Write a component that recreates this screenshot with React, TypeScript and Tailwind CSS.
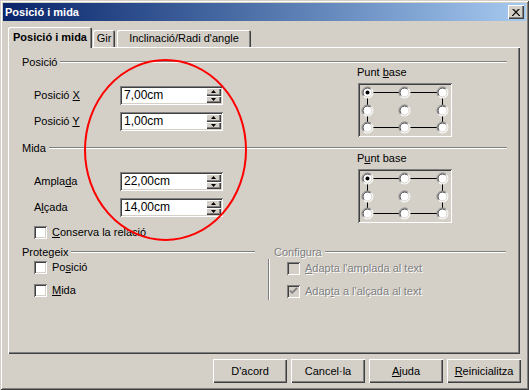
import React from 'react';

// classic win2000 bevels
const sunken = 'shadow-[inset_1px_1px_#808080,inset_-1px_-1px_#ffffff,inset_2px_2px_#404040,inset_-2px_-2px_#d4d0c8]';
const raised = 'shadow-[inset_1px_1px_#ffffff,inset_-1px_-1px_#404040,inset_-2px_-2px_#808080]';
const disabledText = 'text-[#808080] [text-shadow:1px_1px_0_#ffffff]';

function Header({ label, disabled, className }: { label: string; disabled?: boolean; className?: string }) {
    return (
        <div className={`flex items-center h-[13px] ${className ?? ''}`}>
            <span className={`leading-[13px] ${disabled ? disabledText : ''}`}>{label}</span>
            <div className="flex-1 ml-[3px] mb-[1px] h-[2px] border-t border-t-[#808080] border-b border-b-white" />
        </div>
    );
}

function SpinButton({ up }: { up?: boolean }) {
    return (
        <div className={`flex-1 flex items-center justify-center bg-[#d4d0c8] ${raised}`}>
            <svg width="5" height="3" viewBox="0 0 5 3">
                {up ? <path d="M2.5 0 L5 3 L0 3 Z" fill="#000" /> : <path d="M0 0 L5 0 L2.5 3 Z" fill="#000" />}
            </svg>
        </div>
    );
}

function Field({ label, value }: { label: React.ReactNode; value: string }) {
    return (
        <div className="flex items-center h-[19px]">
            <span className="w-[86px] leading-[13px]">{label}</span>
            <div className={`flex w-[103px] h-[19px] bg-white p-[2px] ${sunken}`}>
                <span className="flex-1 pl-[2px] leading-[15px] text-[12px]">{value}</span>
                <div className="flex flex-col w-[15px]">
                    <SpinButton up />
                    <SpinButton />
                </div>
            </div>
        </div>
    );
}

function Check({ label, checked, disabled }: { label: React.ReactNode; checked?: boolean; disabled?: boolean }) {
    return (
        <div className="flex items-center h-[13px]">
            <div className={`w-[13px] h-[13px] flex items-center justify-center ${disabled ? 'bg-[#d4d0c8]' : 'bg-white'} ${sunken}`}>
                {checked && (
                    <svg width="13" height="13" viewBox="0 0 13 13">
                        <path d="M3 5.5 L5.2 7.8 L10 3" stroke={disabled ? '#808080' : '#000'} strokeWidth="1.8" fill="none" />
                    </svg>
                )}
            </div>
            <span className={`ml-[5px] leading-[13px] ${disabled ? disabledText : ''}`}>{label}</span>
        </div>
    );
}

// radio knob for the base point grid
function Knob({ x, y, on }: { x: number; y: number; on?: boolean }) {
    const r1 = 5.5;
    const r2 = 4.5;
    const d = 0.7071;
    const arc = (r: number, tl: boolean) =>
        tl
            ? `M${x - r * d} ${y + r * d} A${r} ${r} 0 0 1 ${x + r * d} ${y - r * d}`
            : `M${x + r * d} ${y - r * d} A${r} ${r} 0 0 1 ${x - r * d} ${y + r * d}`;
    return (
        <g>
            <circle cx={x} cy={y} r={5.5} fill="#fff" />
            <path d={arc(r1, true)} stroke="#808080" fill="none" />
            <path d={arc(r2, true)} stroke="#404040" fill="none" />
            <path d={arc(r1, false)} stroke="#fff" fill="none" />
            <path d={arc(r2, false)} stroke="#d4d0c8" fill="none" />
            {on && <circle cx={x} cy={y} r={2} fill="#000" />}
        </g>
    );
}

function PointGrid() {
    const xs = [9.5, 46.5, 84.5];
    const ys = [9.5, 27.5, 44.5];
    return (
        <div className={`ml-[1px] mt-[4px] w-[94px] h-[54px] ${sunken}`}>
            <svg width="94" height="54" viewBox="0 0 94 54">
                <path
                    d={`M${xs[0]} ${ys[0]} H${xs[2]} M${xs[0]} ${ys[2]} H${xs[2]} M${xs[0]} ${ys[0]} V${ys[2]} M${xs[2]} ${ys[0]} V${ys[2]}`}
                    stroke="#000"
                    fill="none"
                />
                {ys.map((y, j) => xs.map((x, i) => <Knob key={`${i}-${j}`} x={x} y={y} on={i === 0 && j === 0} />))}
            </svg>
        </div>
    );
}

function DlgButton({ children }: { children: React.ReactNode }) {
    return (
        <div className={`w-[74px] h-[24px] flex items-center justify-center bg-[#d4d0c8] ${raised}`}>
            {children}
        </div>
    );
}

export default function App() {
    return (
        <div className="relative w-[529px] h-[390px] p-[3px] bg-[#d4d0c8] text-black text-[11px] font-['Liberation_Sans',Arial,sans-serif] shadow-[inset_1px_1px_#d4d0c8,inset_-1px_-1px_#404040,inset_2px_2px_#ffffff,inset_-2px_-2px_#808080] overflow-hidden">
            {/* title bar */}
            <div className="flex items-center justify-between h-[18px] pl-[2px] pr-[2px] bg-linear-to-r from-[#0a246a] to-[#a6caf0]">
                <span className="text-white font-bold leading-[13px]">Posició i mida</span>
                <div className={`w-[16px] h-[14px] flex items-center justify-center bg-[#d4d0c8] ${raised}`}>
                    <svg width="8" height="7" viewBox="0 0 8 7">
                        <path d="M0.5 0 L7.5 7 M7.5 0 L0.5 7 M1.5 0 L8 7 M6.5 0 L0 7" stroke="#000" strokeWidth="1" fill="none" />
                    </svg>
                </div>
            </div>

            {/* tabs */}
            <div className="flex items-end h-[20px] mt-[6px] ml-[5px]">
                <div className={`relative z-10 -mb-[1px] w-[84px] h-[21px] flex items-center justify-center bg-[#d4d0c8] font-bold rounded-t-[2px] shadow-[inset_1px_1px_#ffffff,inset_-1px_0_#404040,inset_-2px_0_#808080]`}>
                    Posició i mida
                </div>
                <div className="ml-[1px] w-[22px] h-[17px] flex items-center justify-center rounded-t-[2px] shadow-[inset_1px_1px_#ffffff,inset_-1px_0_#404040,inset_-2px_0_#808080]">
                    Gir
                </div>
                <div className="ml-[2px] w-[134px] h-[17px] flex items-center justify-center rounded-t-[2px] shadow-[inset_1px_1px_#ffffff,inset_-1px_0_#404040,inset_-2px_0_#808080]">
                    Inclinació/Radi d'angle
                </div>
            </div>

            {/* tab panel */}
            <div className="flex flex-col w-[512px] h-[307px] ml-[5px] pt-[9px] shadow-[inset_1px_1px_#ffffff,inset_-1px_-1px_#404040,inset_-2px_-2px_#808080]">
                <Header label="Posició" className="ml-[14px] mr-[13px]" />
                <div className="flex -mt-[3px]">
                    <div className="w-[323px] ml-[26px] pt-[20px] flex flex-col gap-[7px]">
                        <Field label={<>Posició <u>X</u></>} value="7,00cm" />
                        <Field label={<>Posició <u>Y</u></>} value="1,00cm" />
                    </div>
                    <div className="flex flex-col">
                        <span className="h-[13px] leading-[13px]">Punt <u>b</u>ase</span>
                        <PointGrid />
                    </div>
                </div>

                <Header label="Mida" className="mt-[5px] ml-[14px] mr-[13px]" />
                <div className="flex -mt-[3px]">
                    <div className="w-[323px] ml-[26px] pt-[20px] flex flex-col">
                        <Field label={<>Ampla<u>d</u>a</>} value="22,00cm" />
                        <div className="mt-[7px]">
                            <Field label={<>A<u>l</u>çada</>} value="14,00cm" />
                        </div>
                        <div className="mt-[9px]">
                            <Check label={<><u>C</u>onserva la relació</>} />
                        </div>
                    </div>
                    <div className="flex flex-col">
                        <span className="h-[13px] leading-[13px]">P<u>u</u>nt base</span>
                        <PointGrid />
                    </div>
                </div>

                <div className="flex mt-[7px]">
                    <div className="ml-[14px] w-[233px] flex flex-col">
                        <Header label="Protegeix" />
                        <div className="pl-[12px] pt-[2px] flex flex-col gap-[10px]">
                            <Check label={<>Po<u>s</u>ició</>} />
                            <Check label={<><u>M</u>ida</>} />
                        </div>
                    </div>
                    <div className="ml-[13px] w-[238px] flex flex-col">
                        <Header label="Configura" disabled className="pl-[6px]" />
                        <div className="h-[41px] pl-[18px] pt-[3px] flex flex-col gap-[10px] border-l border-l-[#808080] shadow-[inset_1px_0_#ffffff]">
                            <Check label={<><u>A</u>dapta l'amplada al text</>} disabled />
                            <Check label={<>Adap<u>t</u>a a l'alçada al text</>} checked disabled />
                        </div>
                    </div>
                </div>
            </div>

            {/* dialog buttons */}
            <div className="flex justify-end gap-[4px] mt-[5px] mr-[5px]">
                <DlgButton>D'acord</DlgButton>
                <DlgButton>Cancel·la</DlgButton>
                <DlgButton><span><u>A</u>juda</span></DlgButton>
                <DlgButton><span><u>R</u>einicialitza</span></DlgButton>
            </div>

            {/* red annotation circle drawn over the dialog */}
            <svg className="absolute left-0 top-0 pointer-events-none" width="529" height="390" viewBox="0 0 529 390">
                <ellipse cx="165.5" cy="150" rx="80.5" ry="90" stroke="#ff0000" strokeWidth="2" fill="none" />
            </svg>
        </div>
    );
}
